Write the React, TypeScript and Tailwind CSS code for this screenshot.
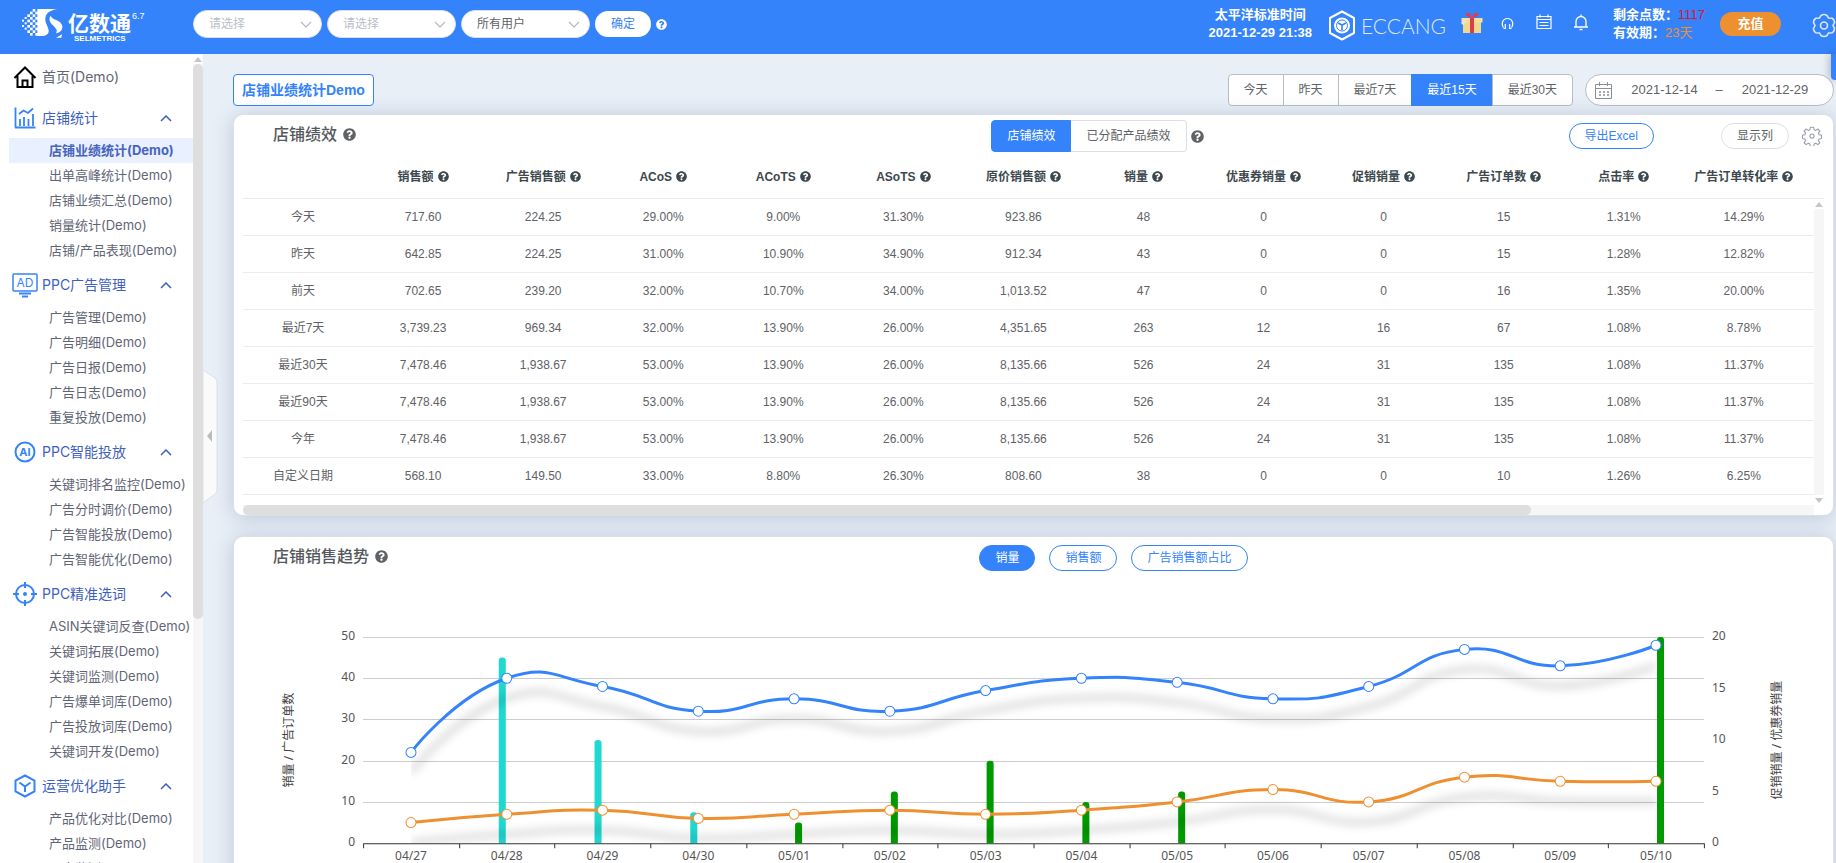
import { FaQuestionCircle } from "react-icons/fa";

const MENU = [
  {
    title: "店铺统计",
    icon: "chart",
    items: ["店铺业绩统计(Demo)", "出单高峰统计(Demo)", "店铺业绩汇总(Demo)", "销量统计(Demo)", "店铺/产品表现(Demo)"],
  },
  {
    title: "PPC广告管理",
    icon: "ad",
    items: ["广告管理(Demo)", "广告明细(Demo)", "广告日报(Demo)", "广告日志(Demo)", "重复投放(Demo)"],
  },
  {
    title: "PPC智能投放",
    icon: "ai",
    items: ["关键词排名监控(Demo)", "广告分时调价(Demo)", "广告智能投放(Demo)", "广告智能优化(Demo)"],
  },
  {
    title: "PPC精准选词",
    icon: "target",
    items: [
      "ASIN关键词反查(Demo)",
      "关键词拓展(Demo)",
      "关键词监测(Demo)",
      "广告爆单词库(Demo)",
      "广告投放词库(Demo)",
      "关键词开发(Demo)",
    ],
  },
  {
    title: "运营优化助手",
    icon: "cube",
    items: ["产品优化对比(Demo)", "产品监测(Demo)", "跟卖监测(Demo)"],
  },
];

const COLUMNS = [
  "销售额",
  "广告销售额",
  "ACoS",
  "ACoTS",
  "ASoTS",
  "原价销售额",
  "销量",
  "优惠券销量",
  "促销销量",
  "广告订单数",
  "点击率",
  "广告订单转化率",
];

const ROWS = [
  ["今天", "717.60", "224.25", "29.00%", "9.00%", "31.30%", "923.86", "48", "0", "0", "15", "1.31%", "14.29%"],
  ["昨天", "642.85", "224.25", "31.00%", "10.90%", "34.90%", "912.34", "43", "0", "0", "15", "1.28%", "12.82%"],
  ["前天", "702.65", "239.20", "32.00%", "10.70%", "34.00%", "1,013.52", "47", "0", "0", "16", "1.35%", "20.00%"],
  ["最近7天", "3,739.23", "969.34", "32.00%", "13.90%", "26.00%", "4,351.65", "263", "12", "16", "67", "1.08%", "8.78%"],
  ["最近30天", "7,478.46", "1,938.67", "53.00%", "13.90%", "26.00%", "8,135.66", "526", "24", "31", "135", "1.08%", "11.37%"],
  ["最近90天", "7,478.46", "1,938.67", "53.00%", "13.90%", "26.00%", "8,135.66", "526", "24", "31", "135", "1.08%", "11.37%"],
  ["今年", "7,478.46", "1,938.67", "53.00%", "13.90%", "26.00%", "8,135.66", "526", "24", "31", "135", "1.08%", "11.37%"],
  ["自定义日期", "568.10", "149.50", "33.00%", "8.80%", "26.30%", "808.60", "38", "0", "0", "10", "1.26%", "6.25%"],
];

const DAYS = ["04/27", "04/28", "04/29", "04/30", "05/01", "05/02", "05/03", "05/04", "05/05", "05/06", "05/07", "05/08", "05/09", "05/10"];
const SALES = [22, 40, 38, 32, 35, 32, 37, 40, 39, 35, 38, 47, 43, 48];
const AD_ORDERS = [5, 7, 8, 6, 7, 8, 7, 8, 10, 13, 10, 16, 15, 15];
const COUPON = [0, 18, 10, 3, 0, 0, 0, 0, 0, 0, 0, 0, 0, 0];
const PROMO = [0, 0, 0, 0, 2, 5, 8, 4, 5, 0, 0, 0, 0, 20];

const RANGES = ["今天", "昨天", "最近7天", "最近15天", "最近30天"];

function MenuIcon({ name }: { name: string }) {
  const common = {
    width: 26,
    height: 26,
    viewBox: "0 0 26 26",
    fill: "none",
    stroke: "#3483fa",
    strokeWidth: 2,
    "aria-hidden": true,
  };
  if (name === "home")
    return (
      <svg {...common} stroke="#000">
        <path d="M2.5 14 13 3.500 23.500 14M5.500 12v11h15V12M10.500 23v-6.500h5V23" />
      </svg>
    );
  if (name === "chart")
    return (
      <svg {...common} strokeWidth={1.8}>
        <path d="M3.500 2.500v20M3 22.500h20.500" />
        <path d="M8 14v7M12 12v9M16.500 14v7M21 9v12M7 9l4.500-3.500 4.500 2.500 5-4.500" />
      </svg>
    );
  if (name === "ad")
    return (
      <svg {...common} strokeWidth={1.5}>
        <rect x="1" y="2" width="24" height="17" rx="1" />
        <path d="M7 21.500h12M10 24.500h6" strokeWidth={2} />
        <text x="13" y="15" textAnchor="middle" fontSize="12" fill="#3483fa" stroke="none">
          AD
        </text>
      </svg>
    );
  if (name === "ai")
    return (
      <svg {...common}>
        <circle cx="13" cy="13" r="9.500" />
        <text x="13" y="17" textAnchor="middle" fontSize="11" fontWeight="bold" fill="#3483fa" stroke="none">
          AI
        </text>
      </svg>
    );
  if (name === "target")
    return (
      <svg {...common}>
        <circle cx="13" cy="13" r="9" />
        <circle cx="13" cy="13" r="2" fill="#3483fa" stroke="none" />
        <path d="M13 1v6M13 19v6M1 13h6M19 13h6" />
      </svg>
    );
  return (
    <svg {...common}>
      <path d="M13 2.500 22.500 7.700v10.600L13 23.500 3.500 18.300V7.700z" />
      <path d="m7.500 9.500 5.500 4 5.500-4M13 13.500v5.500" />
    </svg>
  );
}

function Chevron({ up = false, className = "" }: { up?: boolean; className?: string }) {
  return (
    <svg width="12" height="7" viewBox="0 0 12 7" fill="none" stroke="currentColor" strokeWidth={up ? 1.5 : 1.2} className={className} aria-hidden="true">
      <path d={up ? "M1 6 6 1l5 5" : "m1 1 5 5 5-5"} />
    </svg>
  );
}

function Arrow({ dir }: { dir: "up" | "down" }) {
  return (
    <svg width="8" height="5" viewBox="0 0 8 5" fill="#c6c6c6" aria-hidden="true">
      <path d={dir === "up" ? "M0 5 4 0l4 5z" : "M0 0h8L4 5z"} />
    </svg>
  );
}

function Logo() {
  const dots: [number, number][] = [
    [30, 8], [38, 0], [46, 8], [38, 16], [30, 24], [22, 16], [46, 24], [14, 24], [22, 32], [38, 32], [6, 32], [14, 40],
    [30, 40], [46, 40], [6, 48], [22, 48], [38, 48], [14, 56], [30, 56], [46, 56], [22, 64], [38, 64], [30, 72], [46, 72],
  ];
  return (
    <div className="flex w-[127px] shrink-0 items-start text-white">
      <svg width="44" height="30" viewBox="6 0 132 90" fill="#fff" aria-hidden="true">
        {dots.map(([x, y]) => (
          <rect key={`${x}-${y}`} x={x} y={y} width={x < 20 ? 6 : 8} height={x < 20 ? 6 : 8} />
        ))}
        <path d="M52 0H112C88 4 75 14 76 32C77 46 86 54 86 66C86 76 78 81 64 81H52Z" />
        <path d="M92 20C96 34 125 32 127 52C128 63 120 71 108 73C117 60 98 52 91 40C87 32 88 26 92 20Z" />
        <path d="m108 86 18-10-2 10Z" />
      </svg>
      <div className="ml-[2px] mt-1">
        <div className="text-[21px] leading-[22px] font-bold">亿数通</div>
        <div className="pl-[6px] text-[8px] leading-[8px] font-bold">SELMETRICS</div>
      </div>
      <span className="ml-px mt-px text-[9px] leading-[12px]">6.7</span>
    </div>
  );
}

function HeaderSelect({ label, muted }: { label: string; muted?: boolean }) {
  return (
    <div className="relative">
      <select
        aria-label={label}
        className={`h-7 w-[129px] appearance-none rounded-full border border-[#dcdfe6] bg-white pl-[15px] text-xs ${muted ? "text-[#b9bec8]" : "text-[#606266]"}`}
      >
        <option>{label}</option>
      </select>
      <Chevron className="pointer-events-none absolute right-[10px] top-[11px] text-[#b4b8bf]" />
    </div>
  );
}

function GearIcon({ size, className }: { size: number; className: string }) {
  return (
    <svg width={size} height={size} viewBox="0 0 24 24" fill="none" stroke="currentColor" strokeWidth="1.300" strokeLinejoin="round" className={className} aria-hidden="true">
      <path d="M10 1.500h4l.6 3 1.900.8 2.600-1.700 2.300 2.300-1.700 2.600.8 1.900 3 .6v4l-3 .6-.8 1.900 1.700 2.600-2.300 2.300-2.600-1.700-1.900.8-.6 3h-4l-.6-3-1.900-.8-2.600 1.700-2.300-2.300 1.700-2.600-.8-1.900-3-.6v-4l3-.6.8-1.900L2.600 5.900l2.300-2.300 2.600 1.700 1.900-.8z" />
      <circle cx="12" cy="12" r="2.500" />
    </svg>
  );
}

function Header() {
  return (
    <header className="flex h-[54px] shrink-0 items-start bg-[#3483fa] pl-[22px] text-xs">
      <div className="mt-[9px]">
        <Logo />
      </div>
      <div className="ml-[44px] mt-[10px] flex items-center gap-[5px]">
        <HeaderSelect label="请选择" muted />
        <HeaderSelect label="请选择" muted />
        <HeaderSelect label="所有用户" />
        <button className="h-[26px] w-[56px] rounded-full bg-white text-[#3483fa]">确定</button>
        <FaQuestionCircle size={11} className="text-white" />
      </div>

      <div className="ml-auto flex items-start text-white">
        <div className="mt-[6px] text-center text-[13px] leading-[18px] font-bold">
          <div>太平洋标准时间</div>
          <div>2021-12-29 21:38</div>
        </div>
        <a href="#eccang" className="ml-[16px] mt-[10px] flex items-center gap-[5px]">
          <svg width="28" height="31" viewBox="0 0 28 31" fill="none" stroke="#fff" aria-hidden="true">
            <path d="M14 1.500 26 8v15L14 29.500 2 23V8z" strokeWidth="2" strokeLinejoin="round" />
            <circle cx="14" cy="15.500" r="8" fill="#fff" stroke="none" />
            <circle cx="14" cy="15.500" r="5.500" stroke="#3483fa" strokeWidth="1" />
            <path d="m10 13 4 2 4-2M14 15v5" stroke="#3483fa" strokeWidth="1.600" />
          </svg>
          <span className="font-['Lato',sans-serif] text-[21px] leading-6 font-light text-[#dbe8fd]">ECCANG</span>
        </a>
        <button aria-label="礼品" className="ml-[14px] mt-[11px]">
          <svg width="24" height="24" viewBox="0 0 24 24" aria-hidden="true">
            <rect x="3" y="10" width="18" height="12" fill="#f0d98a" />
            <rect x="1.500" y="7" width="21" height="4.500" fill="#f5e19b" />
            <rect x="10" y="7" width="4" height="15" fill="#e23b4b" />
            <path d="M12 7C8 6 5 5 6 2c3-1 5 1 6 5zM12 7c4-1 7-2 6-5-3-1-5 1-6 5z" fill="#e23b4b" />
            <path d="m1 12 3-3 2 2-3 3z" fill="#dfe6ee" />
          </svg>
        </button>
        <button aria-label="客服" className="ml-[17px] mt-[17px]">
          <svg width="13" height="13" viewBox="0 0 13 13" fill="none" stroke="#fff" strokeWidth="1.200" aria-hidden="true">
            <path d="M2.500 10.500C0 7 1.500 1.500 6.500 1.500S13 7 10.500 10.500" />
            <path d="M4.300 7v4.500H2.500M8.700 7v4.500h1.800" />
          </svg>
        </button>
        <button aria-label="日历" className="ml-[22px] mt-[14px]">
          <svg width="16" height="16" viewBox="0 0 16 16" fill="none" stroke="#fff" strokeWidth="1.200" aria-hidden="true">
            <path d="M1 2.500h14v12H1zM4 .500v3M12 .500v3M1 5.500h14M3.500 8.500h9M3.500 11.500h9" />
          </svg>
        </button>
        <button aria-label="通知" className="ml-[21px] mt-[14px]">
          <svg width="16" height="17" viewBox="0 0 16 17" fill="none" stroke="#fff" strokeWidth="1.300" aria-hidden="true">
            <path d="M1 13h14M3 13V7.500a5 5 0 0 1 10 0V13M8 .500v2M6.500 15.500h3" />
          </svg>
        </button>
        <div className="ml-[24px] mt-[6px] w-[107px] text-[13px] leading-[18px] font-bold">
          <div>
            剩余点数：<span className="font-normal text-[#e0142c]">1117</span>
          </div>
          <div>
            有效期：<span className="font-normal text-[#ee9030]">23天</span>
          </div>
        </div>
        <button className="mt-[12px] h-6 w-[61px] rounded-full bg-[#ee9030] text-[13px] font-bold">充值</button>
        <button aria-label="设置" className="ml-[31px] mt-[13px]">
          <svg width="24" height="25" viewBox="0 0 24 25" fill="none" stroke="#dbe8fd" strokeWidth="1.600" aria-hidden="true">
            <path d="M9 2.500Q12 .500 15 2.500L16.500 5 20 5.200Q22.500 6.500 22.500 9.500L21 12.500 22.500 15.500Q22.500 18.500 20 19.800L16.500 20 15 22.500Q12 24.500 9 22.500L7.500 20 4 19.800Q1.500 18.500 1.500 15.500L3 12.500 1.500 9.500Q1.500 6.500 4 5.200L7.500 5Z" />
            <circle cx="12" cy="12.500" r="3.500" />
          </svg>
        </button>
      </div>
    </header>
  );
}

function Sidebar() {
  return (
    <aside className="flex w-[203px] shrink-0 overflow-hidden bg-white font-['Inter','Noto_Sans_CJK_SC',sans-serif]">
      <nav className="w-[193px] overflow-hidden text-sm whitespace-nowrap text-[#5f6575]">
        <a href="#home" className="flex h-[42px] items-center gap-1 pl-[12px] pt-[3px]">
          <MenuIcon name="home" />
          首页(Demo)
        </a>
        {MENU.map((group, g) => (
          <section key={group.title}>
            <button className="flex h-[42px] w-full items-center gap-1 pl-[12px] pr-[21px] pt-[2px] text-[#3f5fc0]">
              <MenuIcon name={group.icon} />
              {group.title}
              <Chevron up className="ml-auto" />
            </button>
            <ul className="text-[13px]">
              {group.items.map((item, i) => (
                <li key={item} className="ml-[9px]">
                  <a
                    href="#menu"
                    className={`block h-[25px] pl-10 leading-[25px] ${g === 0 && i === 0 ? "bg-[#e9f0ff] font-bold text-[#4765bd]" : ""}`}
                  >
                    {item}
                  </a>
                </li>
              ))}
            </ul>
          </section>
        ))}
      </nav>
      <div className="flex w-[10px] flex-col items-center bg-[#f6f6f6]">
        <div className="flex h-[10px] w-full items-center justify-center bg-white">
          <Arrow dir="up" />
        </div>
        <div className="h-[555px] w-full rounded-full bg-[#dedede]" />
      </div>
    </aside>
  );
}

function Toolbar() {
  return (
    <div className="flex h-8 items-center text-xs text-[#606266]">
      <h1 className="flex h-8 items-center rounded border border-[#3483fa] bg-white px-2 text-sm font-bold text-[#3483fa]">
        店铺业绩统计Demo
      </h1>
      <div className="ml-auto flex">
        {RANGES.map((range) => (
          <button
            key={range}
            className={`-ml-px h-8 border px-[15px] first:rounded-l last:rounded-r ${
              range === "最近15天" ? "border-[#3483fa] bg-[#3483fa] text-white" : "border-[#b9bec2] bg-white"
            }`}
          >
            {range}
          </button>
        ))}
      </div>
      <div className="ml-3 flex h-8 w-[249px] items-center rounded-full border border-[#b9bec2] bg-white pl-[9px] text-[13px]">
        <svg width="17" height="17" viewBox="0 0 17 17" fill="none" stroke="#8b9096" aria-hidden="true">
          <path d="M.500 2.500h16v14H.500zM.500 6.500h16M4.500 0v4M12.500 0v4" />
          <path d="M4 10h2M8 10h2M12 10h2M4 13h2M8 13h2M12 13h2" strokeWidth="1.500" />
        </svg>
        <input aria-label="开始日期" defaultValue="2021-12-14" className="ml-[10px] w-[85px] text-center" />
        <span className="w-6 text-center">–</span>
        <input aria-label="结束日期" defaultValue="2021-12-29" className="w-[88px] text-center" />
      </div>
    </div>
  );
}

function Card({ children }: { children: React.ReactNode }) {
  return (
    <section className="rounded-[10px] border border-[#dcdfe3] bg-white shadow-[0_2px_20px_rgba(90,110,150,0.3)]">
      {children}
    </section>
  );
}

function CardTitle({ children }: { children: React.ReactNode }) {
  return (
    <h2 className="flex items-center gap-[6px] pb-[3px] pl-[39px] text-base leading-6 font-medium text-[#55585c]">
      {children}
      <FaQuestionCircle size={13} className="text-[#606266]" />
    </h2>
  );
}

function Performance() {
  return (
    <Card>
      <div className="grid h-[42px] grid-cols-[757fr_212fr_629fr] items-center text-xs text-[#606266]">
        <CardTitle>店铺绩效</CardTitle>
        <div className="flex items-center whitespace-nowrap">
          <button className="h-8 rounded-l border border-[#3483fa] bg-[#3483fa] px-[15px] text-white">店铺绩效</button>
          <button className="h-8 rounded-r border border-l-0 border-[#dcdfe6] px-[15px]">已分配产品绩效</button>
          <FaQuestionCircle size={13} className="ml-1" />
        </div>
        <div className="flex items-center justify-end pr-[11px]">
          <button className="h-[26px] rounded-full border border-[#3483fa] px-[15px] text-[#3483fa]">导出Excel</button>
          <button className="ml-[67px] h-[26px] rounded-full border border-[#dcdfe6] px-[15px]">显示列</button>
          <button aria-label="表格设置" className="ml-[13px]">
            <GearIcon size={20} className="text-[#999fa6]" />
          </button>
        </div>
      </div>

      <div className="mx-[9px] flex">
        <table className="w-full min-w-0 flex-1 table-fixed border-separate border-spacing-0 text-center text-xs text-[#606266]">
          <thead>
            <tr className="h-[42px] text-[#3c484d]">
              <th className="border-b border-[#e9ecf3]" aria-label="日期" />
              {COLUMNS.map((column) => (
                <th key={column} className="border-b border-[#e9ecf3] pb-[2px] font-bold whitespace-nowrap">
                  <span className="flex items-center justify-center gap-1">
                    {column}
                    <FaQuestionCircle size={11} />
                  </span>
                </th>
              ))}
              <th className="w-[10px] border-b border-[#e9ecf3]" aria-hidden="true" />
            </tr>
          </thead>
          <tbody>
            {ROWS.map((row) => (
              <tr key={row[0]} className="h-[37px]">
                {row.map((cell, i) => (
                  <td key={i} className="border-b border-[#e9ecf0]">
                    {cell}
                  </td>
                ))}
                <td className="border-b border-[#e9ecf0]" aria-hidden="true" />
              </tr>
            ))}
          </tbody>
        </table>
        <div className="flex w-[10px] shrink-0 flex-col items-center">
          <div className="h-[42px] w-full border-b border-[#e9ecf3]" />
          <div className="flex h-[10px] items-center">
            <Arrow dir="up" />
          </div>
          <div className="w-full flex-1 bg-[#f6f6f6]" />
        </div>
      </div>
      <div className="mx-[9px] flex h-[10px] items-center justify-end pr-[1px]">
        <Arrow dir="down" />
      </div>
      <div className="ml-[9px] mr-[19px] h-[10px] bg-[#f6f6f6]">
        <div className="h-full w-[82%] rounded-full bg-[#dedede]" />
      </div>
    </Card>
  );
}

const PLOT = { left: 129, right: 1469, top: 20, bottom: 226 };
const STEP = (PLOT.right - PLOT.left) / DAYS.length;
const centerX = (i: number) => PLOT.left + STEP * (i + 0.5);
const scaleY = (value: number, max: number) => PLOT.bottom - (value / max) * (PLOT.bottom - PLOT.top);

function smoothPath(values: number[]) {
  const pts = values.map((v, i) => [centerX(i), scaleY(v, 50)]);
  let d = `M${pts[0][0]} ${pts[0][1]}`;
  let [cx, cy] = pts[0];
  for (let i = 1; i < pts.length; i++) {
    const [x, y] = pts[i];
    const next = pts[i + 1];
    if (!next) {
      d += `C${cx} ${cy} ${x} ${y} ${x} ${y}`;
      break;
    }
    const prev = pts[i - 1];
    const before = Math.hypot(x - prev[0], y - prev[1]);
    const after = Math.hypot(next[0] - x, next[1] - y);
    const ratio = after / (before + after);
    const vx = (next[0] - prev[0]) * 0.5;
    const vy = (next[1] - prev[1]) * 0.5;
    d += `C${cx} ${cy} ${x - vx * (1 - ratio)} ${y - vy * (1 - ratio)} ${x} ${y}`;
    cx = x + vx * ratio;
    cy = y + vy * ratio;
  }
  return d;
}

function Bar({ x, value, color }: { x: number; value: number; color: string }) {
  if (!value) return null;
  const y = scaleY(value, 20);
  return <path d={`M${x} ${PLOT.bottom}V${y + 3}q0-3 3-3h1q3 0 3 3V${PLOT.bottom}z`} fill={color} />;
}

function TrendChart() {
  const series = [
    { values: SALES, color: "#3483fa" },
    { values: AD_ORDERS, color: "#ee9030" },
  ];
  return (
    <svg viewBox="0 0 1598 290" className="mt-[38px] block w-full font-['Noto_Sans','Noto_Sans_CJK_SC',sans-serif]" role="img" aria-label="店铺销售趋势">
      <defs>
        <filter id="soft" x="-5%" y="-60%" width="110%" height="220%">
          <feGaussianBlur stdDeviation="5" />
        </filter>
        <clipPath id="plot">
          <rect x={centerX(0)} y="0" width={centerX(13) - centerX(0)} height={PLOT.bottom} />
        </clipPath>
      </defs>
      {[0, 10, 20, 30, 40, 50].map((v) => (
        <g key={v}>
          {v > 0 && (
            <line x1={PLOT.left} x2={PLOT.right} y1={Math.round(scaleY(v, 50)) + 0.5} y2={Math.round(scaleY(v, 50)) + 0.5} stroke="#ccc" />
          )}
          <text x="121" y={scaleY(v, 50) + 3} textAnchor="end" fontSize="12" fill="#555">
            {v}
          </text>
        </g>
      ))}
      {[0, 5, 10, 15, 20].map((v) => (
        <text key={v} x="1477" y={scaleY(v, 20) + 3} fontSize="12" fill="#555">
          {v}
        </text>
      ))}
      {DAYS.map((day, i) => (
        <g key={day}>
          <Bar x={centerX(i) - 8} value={COUPON[i]} color="#1fd8d0" />
          <Bar x={centerX(i) + 1} value={PROMO[i]} color="#009a00" />
          <text x={centerX(i)} y="243" textAnchor="middle" fontSize="12" fill="#555">
            {day}
          </text>
        </g>
      ))}
      <path
        d={`M${PLOT.left} 226.500H${PLOT.right + 1}` + [...DAYS, ""].map((_, i) => `M${Math.round(PLOT.left + i * STEP) + 0.5} 226v5`).join("")}
        stroke="#333"
      />
      {series.map(({ values, color }) => (
        <g key={color} fill="none">
          <g clipPath="url(#plot)">
            <g transform="translate(0 20)" filter="url(#soft)">
              <path d={smoothPath(values)} stroke="#000" strokeOpacity="0.300" strokeWidth="3" />
            </g>
          </g>
          <path d={smoothPath(values)} stroke={color} strokeWidth="3" />
          {values.map((v, i) => (
            <circle key={i} cx={centerX(i)} cy={scaleY(v, 50)} r="5" fill="#fff" stroke={color} />
          ))}
        </g>
      ))}
      <g fontSize="12" fill="#444" textAnchor="middle">
        <text transform="translate(59 123) rotate(-90)">销量 / 广告订单数</text>
        <text transform="translate(1546 123) rotate(-90)">促销销量 / 优惠券销量</text>
      </g>
    </svg>
  );
}

function Trend() {
  return (
    <Card>
      <div className="grid h-[42px] grid-cols-[745fr_853fr] items-center text-xs">
        <CardTitle>店铺销售趋势</CardTitle>
        <div className="flex gap-[14px]">
          {["销量", "销售额", "广告销售额占比"].map((name, i) => (
            <button
              key={name}
              className={`h-[26px] rounded-full border border-[#3483fa] px-[15px] ${i === 0 ? "bg-[#3483fa] text-white" : "text-[#3483fa]"}`}
            >
              {name}
            </button>
          ))}
        </div>
      </div>
      <TrendChart />
    </Card>
  );
}

export default function App() {
  return (
    <div className="flex h-screen flex-col overflow-hidden bg-[#e8eff7] font-['Liberation_Sans','Noto_Sans_CJK_SC',sans-serif]">
      <Header />
      <div className="relative flex min-h-0 flex-1">
        <Sidebar />
        <main className="min-w-0 flex-1 overflow-hidden pl-[30px] pr-[2px] pt-5">
          <Toolbar />
          <div className="mt-2 flex flex-col gap-5">
            <Performance />
            <Trend />
          </div>
        </main>
        {/* sidebar collapse handle */}
        <button aria-label="收起菜单" className="absolute left-[203px] top-[316px]">
          <svg width="15" height="134" viewBox="0 0 15 134" aria-hidden="true">
            <path d="M0 0 12 8Q14 10 14 12V120Q14 122 12 124L0 133z" fill="#fafafa" stroke="#d5dce6" strokeWidth=".8" />
            <path d="M9 60v12l-5-6z" fill="#b9bcc0" />
          </svg>
        </button>
        <button aria-label="展开" className="absolute right-0 top-0 h-[26px] w-[5px] rounded-bl bg-[#3483fa] shadow-[0_0_8px_rgba(0,0,0,0.4)]" />
      </div>
    </div>
  );
}
